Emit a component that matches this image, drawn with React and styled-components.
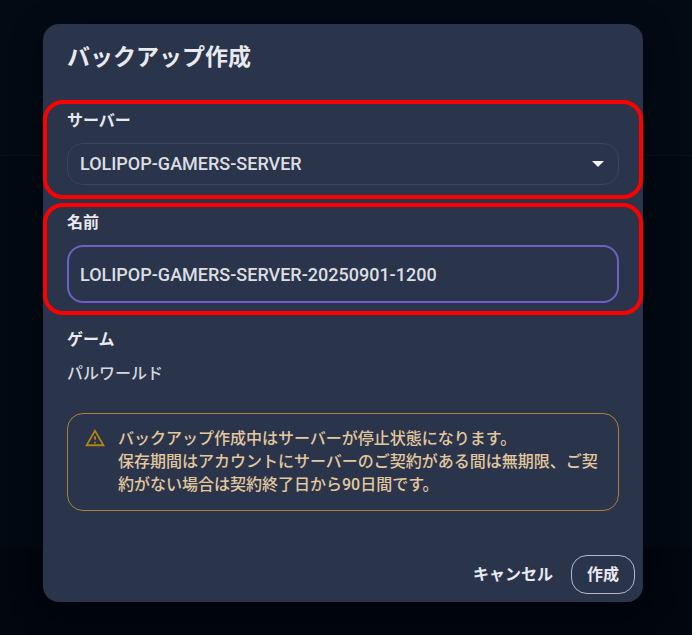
import React, { useState } from "react";
import styled, { createGlobalStyle, css } from "styled-components";

const GlobalStyle = createGlobalStyle`
  *, *::before, *::after { box-sizing: border-box; }
  body {
    margin: 0;
    background: #01060f;
    color: #e9e9f0;
    font-family: Roboto, "Noto Sans CJK JP", sans-serif;
    font-size: 16px;
    line-height: 24px;
  }
`;

const Backdrop = styled.div`
  min-height: 100vh;
  padding: 24px 49px 33px 43px;
  background: linear-gradient(
    #030a14 0 155px,
    #0a0f1a 155px 156px,
    #020912 156px 548px,
    #01060f 548px
  );
`;

const Dialog = styled.form`
  display: flex;
  flex-direction: column;
  max-width: 960px;
  margin: 0 auto;
  border-radius: 16px;
  background: #2a354b;
  box-shadow: 0 8px 32px rgba(0, 0, 0, 0.4);
`;

const Title = styled.h1`
  margin: 0;
  padding: 18px 24px 26px;
  font-size: 23px;
  line-height: 32px;
  font-weight: 700;
`;

const Sections = styled.div`
  display: flex;
  flex-direction: column;
  gap: 4px;
`;

const Section = styled.section`
  display: flex;
  flex-direction: column;
  gap: 10px;
  padding: ${(p) => (p.$compact ? "4px 20px 8px" : "5px 20px 10px")};
  border: 4px solid ${(p) => (p.$marked ? "#ff0000" : "transparent")};
  border-radius: 20px;
`;

const labelText = css`
  margin: 0;
  font-size: 16px;
  line-height: 24px;
  font-weight: 700;
`;

const Label = styled.label`
  ${labelText}
`;

const Heading = styled.h2`
  ${labelText}
`;

const GameName = styled.p`
  margin: 0;
  color: #d6d8df;
  font-weight: 500;
`;

const control = css`
  width: 100%;
  margin: 0;
  border-radius: 16px;
  background: transparent;
  color: #dcdee4;
  font: inherit;
  font-size: 18px;
  font-weight: 500;
  outline: none;
`;

const SelectBox = styled.div`
  display: grid;
  align-items: center;
  > * { grid-area: 1 / 1; }
`;

const Select = styled.select`
  ${control}
  height: 42px;
  padding: 0 44px 0 12px;
  border: 1px solid #3b465c;
  appearance: none;
  option { background: #2a354b; }
`;

const Caret = styled.svg`
  justify-self: end;
  width: 12px;
  height: 6px;
  margin-right: 15px;
  pointer-events: none;
`;

const Input = styled.input`
  ${control}
  height: 58px;
  padding: 0 11px;
  border: 2px solid #6f5fc8;
`;

const Alert = styled.div`
  display: flex;
  gap: 13px;
  margin: 13px 24px 44px;
  padding: 13px 17px 14px;
  border: 1px solid #a8823a;
  border-radius: 16px;
  color: #e3c79d;
  font-weight: 500;
  line-height: 23px;
`;

const AlertIcon = styled.svg`
  flex: none;
  width: 20px;
  height: 22px;
`;

const AlertText = styled.p`
  margin: 0;
`;

const Actions = styled.div`
  display: flex;
  justify-content: flex-end;
  gap: 2px;
  padding: 0 8px 8px;
`;

const Button = styled.button`
  height: 39px;
  padding: 0 15px;
  border: 1px solid ${(p) => (p.$outlined ? "#b4b8c6" : "transparent")};
  border-radius: 16px;
  background: transparent;
  color: #e9e9f2;
  font: inherit;
  font-weight: 700;
  cursor: pointer;
`;

export default function App() {
  const [name, setName] = useState("LOLIPOP-GAMERS-SERVER-20250901-1200");

  return (
    <>
      <GlobalStyle />
      <Backdrop>
        <Dialog role="dialog" aria-labelledby="dialog-title" onSubmit={(e) => e.preventDefault()}>
          <Title id="dialog-title">バックアップ作成</Title>
          <Sections>
            <Section $marked>
              <Label htmlFor="server">サーバー</Label>
              <SelectBox>
                <Select id="server">
                  <option>LOLIPOP-GAMERS-SERVER</option>
                </Select>
                <Caret viewBox="0 0 12 6" aria-hidden="true">
                  <path d="M0 0h12L6 6z" fill="#f2f2f7" />
                </Caret>
              </SelectBox>
            </Section>
            <Section $marked $compact>
              <Label htmlFor="name">名前</Label>
              <Input id="name" value={name} onChange={(e) => setName(e.target.value)} />
            </Section>
            <Section>
              <Heading>ゲーム</Heading>
              <GameName>パルワールド</GameName>
            </Section>
          </Sections>
          <Alert role="note">
            <AlertIcon viewBox="1 1 22 22" aria-hidden="true">
              <path
                d="M12 5.99 19.53 19H4.47L12 5.99M12 2 1 21h22L12 2zm1 14h-2v2h2v-2zm0-6h-2v4h2v-4z"
                fill="#b2830f"
              />
            </AlertIcon>
            <AlertText>
              バックアップ作成中はサーバーが停止状態になります。
              <br />
              保存期間はアカウントにサーバーのご契約がある間は無期限、ご契約がない場合は契約終了日から90日間です。
            </AlertText>
          </Alert>
          <Actions>
            <Button type="button">キャンセル</Button>
            <Button type="submit" $outlined>
              作成
            </Button>
          </Actions>
        </Dialog>
      </Backdrop>
    </>
  );
}
